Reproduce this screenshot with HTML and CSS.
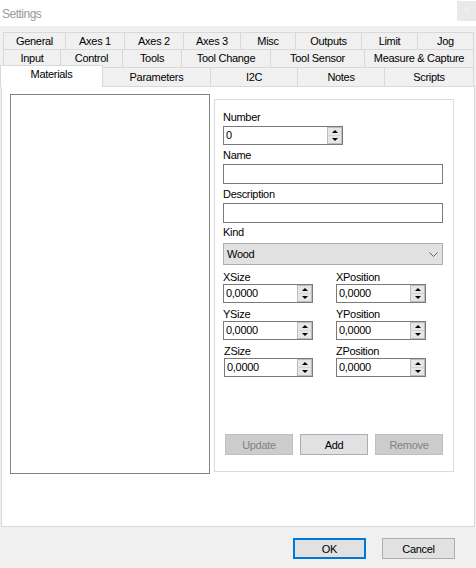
FILE: index.html
```html
<!DOCTYPE html>
<html>
<head>
<meta charset="utf-8">
<link rel="stylesheet" href="styles.css">
</head>
<body>
<div class="window">
  <div class="titlebar">
    <span class="title">Settings</span>
    <span class="close">✕</span>
  </div>
  <div class="tabs">
    <div class="tabrow r1">
      <div class="tab t62">General</div>
      <div class="tab t59">Axes 1</div>
      <div class="tab t59">Axes 2</div>
      <div class="tab t57">Axes 3</div>
      <div class="tab t55">Misc</div>
      <div class="tab t66">Outputs</div>
      <div class="tab t56">Limit</div>
      <div class="tab t57 last">Jog</div>
    </div>
    <div class="tabrow r2">
      <div class="tab t57">Input</div>
      <div class="tab t62">Control</div>
      <div class="tab t59">Tools</div>
      <div class="tab t89">Tool Change</div>
      <div class="tab t94">Tool Sensor</div>
      <div class="tab t110 last">Measure &amp; Capture</div>
    </div>
    <div class="tabrow r3">
      <div class="tab sel">Materials</div>
      <div class="tab t107 nol">Parameters</div>
      <div class="tab t87">I2C</div>
      <div class="tab t87">Notes</div>
      <div class="tab t90 last">Scripts</div>
    </div>
  </div>
  <div class="page">
    <div class="listbox"></div>
    <div class="panel">
      <div class="lbl first">Number</div>
      <div class="num wide">
        <span class="val">0</span>
        <span class="spin"><span class="sb up"></span><span class="sb down"></span></span>
      </div>
      <div class="lbl">Name</div>
      <div class="text"></div>
      <div class="lbl">Description</div>
      <div class="text"></div>
      <div class="lbl kind">Kind</div>
      <div class="combo">
        <span>Wood</span>
        <svg class="chev" width="9" height="5" viewBox="0 0 9 5"><path d="M0.5 0.5 L4.5 4.5 L8.5 0.5" stroke="#666" fill="none" stroke-width="1"/></svg>
      </div>
      <div class="grid">
        <div class="cell">
          <div class="glbl">XSize</div>
          <div class="num"><span class="val">0,0000</span><span class="spin"><span class="sb up"></span><span class="sb down"></span></span></div>
        </div>
        <div class="cell">
          <div class="glbl">XPosition</div>
          <div class="num"><span class="val">0,0000</span><span class="spin"><span class="sb up"></span><span class="sb down"></span></span></div>
        </div>
        <div class="cell">
          <div class="glbl">YSize</div>
          <div class="num"><span class="val">0,0000</span><span class="spin"><span class="sb up"></span><span class="sb down"></span></span></div>
        </div>
        <div class="cell">
          <div class="glbl">YPosition</div>
          <div class="num"><span class="val">0,0000</span><span class="spin"><span class="sb up"></span><span class="sb down"></span></span></div>
        </div>
        <div class="cell shift">
          <div class="glbl">ZSize</div>
          <div class="num"><span class="val">0,0000</span><span class="spin"><span class="sb up"></span><span class="sb down"></span></span></div>
        </div>
        <div class="cell">
          <div class="glbl">ZPosition</div>
          <div class="num"><span class="val">0,0000</span><span class="spin"><span class="sb up"></span><span class="sb down"></span></span></div>
        </div>
      </div>
      <div class="actions">
        <button class="btn disabled">Update</button>
        <button class="btn">Add</button>
        <button class="btn disabled">Remove</button>
      </div>
    </div>
  </div>
  <div class="footer">
    <button class="btn dlg default">OK</button>
    <button class="btn dlg">Cancel</button>
  </div>
</div>
</body>
</html>
```

FILE: styles.css
```css
* { box-sizing: border-box; }
body {
  margin: 0;
  font-family: "Liberation Sans", Arial, sans-serif;
  font-size: 11px;
  letter-spacing: -0.3px;
  color: #000;
}
.window {
  width: 476px;
  height: 568px;
  background: #f0f0f0;
  display: flex;
  flex-direction: column;
  overflow: hidden;
}
.titlebar {
  height: 26px;
  flex-shrink: 0;
  background: #fff;
  display: flex;
  justify-content: space-between;
  align-items: flex-start;
}
.title {
  font-size: 12px;
  letter-spacing: -0.5px;
  color: #9a9a9a;
  line-height: 14px;
  margin-top: 7px;
  padding-left: 2px;
}
.close {
  width: 19px;
  height: 20px;
  margin-top: 1px;
  background: #e9e9e9;
  color: #f6f6f6;
  font-size: 9px;
  line-height: 20px;
  text-align: center;
  letter-spacing: 0;
}
.tabs { padding-top: 6px; flex-shrink: 0; }
.tabrow { display: flex; }
.r1 { margin-left: 3px; height: 17px; }
.r2 { margin-left: 3px; height: 18px; }
.r3 { height: 19px; }
.tab {
  border-top: 1px solid #d9d9d9;
  border-left: 1px solid #d9d9d9;
  background: #f0f0f0;
  text-align: center;
  white-space: nowrap;
}
.r1 .tab { line-height: 16px; }
.r2 .tab { line-height: 17px; }
.r3 .tab { line-height: 18px; }
.tab.last { border-right: 1px solid #d9d9d9; }
.tab.nol { border-left: none; }
.t55 { width: 55px; }
.t56 { width: 56px; }
.t57 { width: 57px; }
.t59 { width: 59px; }
.t62 { width: 62px; }
.t66 { width: 66px; }
.t87 { width: 87px; }
.t89 { width: 89px; }
.t90 { width: 90px; }
.t94 { width: 94px; }
.t107 { width: 107px; }
.t110 { width: 110px; }
.r3 .tab.sel {
  width: 103px;
  height: 22px;
  margin-top: -2px;
  margin-bottom: -1px;
  background: #fff;
  border-right: 1px solid #d9d9d9;
  line-height: 16px;
  position: relative;
  z-index: 1;
}
.page {
  margin-left: 1px;
  width: 474px;
  height: 441px;
  flex-shrink: 0;
  background: #fff;
  border: 1px solid #d9d9d9;
  display: flex;
  align-items: flex-start;
  padding: 7px 0 0 8px;
}
.listbox {
  width: 200px;
  height: 380px;
  border: 1px solid #828282;
  background: #fff;
}
.panel {
  margin-left: 4px;
  margin-top: 5px;
  width: 240px;
  height: 373px;
  border: 1px solid #dcdcdc;
  display: flex;
  flex-direction: column;
  padding: 0 0 0 8px;
}
.lbl {
  line-height: 13px;
  height: 13px;
  margin-top: 4px;
}
.lbl.first { margin-top: 11px; }
.lbl.kind { margin-top: 3px; }
.num {
  display: flex;
  height: 19px;
  border: 1px solid #7a7a7a;
  background: #fff;
  margin-top: 2px;
}
.num.wide { width: 120px; }
.val {
  flex: 1;
  padding-left: 2px;
  line-height: 17px;
}
.spin {
  width: 15px;
  display: flex;
  flex-direction: column;
  flex-shrink: 0;
}
.sb {
  flex: 1;
  background: #e6e6e6;
  border: 1px solid #bcbcbc;
  display: flex;
  align-items: center;
  justify-content: center;
}
.sb.up { border-bottom: none; }
.sb.down { border-top: 1px solid #d4d4d4; }
.sb.up::before {
  content: "";
  width: 0;
  height: 0;
  border-left: 3px solid transparent;
  border-right: 3px solid transparent;
  border-bottom: 3px solid #000;
}
.sb.down::before {
  content: "";
  width: 0;
  height: 0;
  border-left: 3px solid transparent;
  border-right: 3px solid transparent;
  border-top: 3px solid #000;
}
.text {
  width: 220px;
  height: 20px;
  border: 1px solid #7a7a7a;
  background: #fff;
  margin-top: 2px;
}
.combo {
  width: 220px;
  height: 22px;
  margin-top: 4px;
  border: 1px solid #adadad;
  background: #e1e1e1;
  display: flex;
  align-items: center;
  justify-content: space-between;
  padding: 0 4px 0 3px;
}
.chev { display: block; }
.grid {
  margin-top: 6px;
  display: grid;
  grid-template-columns: 90px 90px;
  column-gap: 23px;
  row-gap: 5px;
}
.glbl { line-height: 13px; height: 13px; }
.cell .num { margin-top: 0; }
.cell.shift { padding-left: 1px; }
.actions {
  margin-top: auto;
  margin-bottom: 16px;
  padding-left: 2px;
  display: flex;
  gap: 7px;
}
.btn {
  width: 68px;
  height: 21px;
  margin: 0;
  padding: 0;
  font-family: inherit;
  font-size: 11px;
  letter-spacing: -0.3px;
  color: #000;
  background: #e1e1e1;
  border: 1px solid #adadad;
  border-radius: 0;
}
.btn.disabled {
  background: #cccccc;
  border-color: #bfbfbf;
  color: #838383;
}
.footer {
  flex: 1;
  display: flex;
  justify-content: flex-end;
  align-items: flex-start;
  gap: 16px;
  padding: 11px 21px 0 0;
}
.btn.dlg { width: 73px; }
.btn.default { border: 2px solid #0078d7; }
```
